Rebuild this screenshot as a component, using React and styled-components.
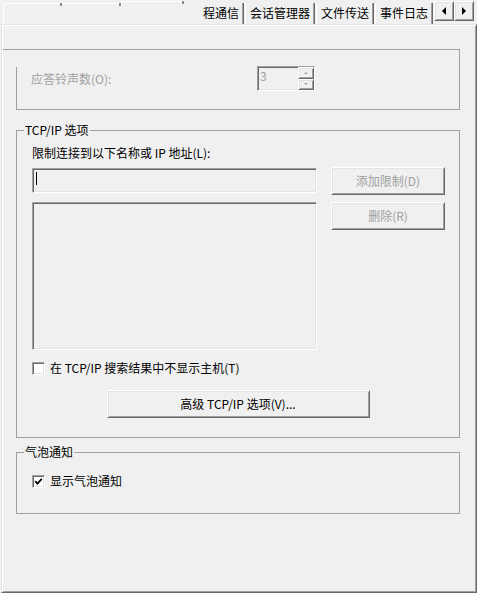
import React from 'react';
import styled, { createGlobalStyle, css } from 'styled-components';

const GlobalStyle = createGlobalStyle`
  html, body {
    margin: 0;
    padding: 0;
    background: #f0f0f0;
  }
  body {
    font-family: "Noto Sans CJK SC", "Liberation Sans", sans-serif;
    font-size: 12px;
    color: #000;
  }
`;

// classic 3D edges
const sunken = css`
  border-style: solid;
  border-width: 1px;
  border-color: #a0a0a0 #fff #fff #a0a0a0;
  box-shadow: inset 1px 1px 0 #696969, inset -1px -1px 0 #e3e3e3;
`;

const raised = css`
  border-style: solid;
  border-width: 1px;
  border-color: #fff #696969 #696969 #fff;
  box-shadow: inset 1px 1px 0 #e3e3e3, inset -1px -1px 0 #a0a0a0;
`;

const Window = styled.div`
  width: 477px;
  height: 593px;
  display: flex;
  flex-direction: column;
  overflow: hidden;
  box-sizing: border-box;
`;

const TabStrip = styled.div`
  height: 24px;
  display: flex;
  align-items: flex-start;
`;

const Ghosts = styled.div`
  flex: 1;
  display: flex;
  padding-left: 3px;
`;

const GhostTab = styled.div`
  position: relative;
  width: ${p => p.$w}px;
  height: ${p => p.$h}px;
  margin-top: ${p => p.$top}px;
  border-top: 1px solid #fff;
  border-left: ${p => (p.$edge ? '1px solid #fff' : 'none')};
  box-sizing: border-box;

  &::after {
    content: '';
    position: absolute;
    right: 0;
    top: -1px;
    width: 2px;
    height: 3px;
    background: #8c8c8c;
  }
`;

const Tab = styled.div`
  height: 21px;
  margin-top: 3px;
  line-height: 20px;
  padding: 0 4px 0 ${p => (p.$cut ? 1 : 4)}px;
  margin-left: 1px;
  border-left: ${p => (p.$cut ? 'none' : '1px solid #fff')};
  border-right: 1px solid #696969;
  box-shadow: inset -1px 0 0 #a0a0a0;
  white-space: nowrap;
  box-sizing: border-box;
`;

const Arrows = styled.div`
  display: flex;
  margin: 1px 3px 0 1px;
`;

const ArrowBtn = styled.div`
  width: 20px;
  height: 20px;
  box-sizing: border-box;
  display: flex;
  align-items: center;
  justify-content: center;
  ${raised}
`;

const Triangle = styled.span`
  width: 0;
  height: 0;
  border-top: 4px solid transparent;
  border-bottom: 4px solid transparent;
  ${p => (p.$dir === 'left' ? 'border-right: 4px solid #000;' : 'border-left: 4px solid #000;')}
`;

const Panel = styled.div`
  flex: 1;
  margin-left: 1px;
  padding: 24px 16px 0 14px;
  border-top: 1px solid #e3e3e3;
  border-left: 1px solid #e3e3e3;
  border-right: 1px solid #696969;
  border-bottom: 1px solid #696969;
  box-shadow: inset 1px 1px 0 #fff, inset -1px -1px 0 #a0a0a0;
  display: flex;
  flex-direction: column;
  box-sizing: border-box;
`;

/* the first box is drawn half clipped: its top line runs to the panel edge
   and its left line only starts below the top */
const RingBox = styled.div`
  position: relative;
  height: 61px;
  box-sizing: border-box;
  padding: 17px 0 0 15px;
  border-right: 1px solid #a0a0a0;
  border-bottom: 1px solid #a0a0a0;

  &::before {
    content: '';
    position: absolute;
    top: 0;
    left: -13px;
    right: 0;
    height: 1px;
    background: #a0a0a0;
  }
  &::after {
    content: '';
    position: absolute;
    left: 0;
    top: 18px;
    bottom: -1px;
    width: 1px;
    background: #a0a0a0;
  }
`;

const Row = styled.div`
  display: flex;
  align-items: center;
`;

const FieldLabel = styled.div`
  width: ${p => p.$w || 'auto'};
  line-height: 14px;
  color: ${p => (p.$disabled ? '#a0a0a0' : '#000')};
  white-space: nowrap;
`;

const Spinner = styled.div`
  width: 58px;
  height: 25px;
  box-sizing: border-box;
  display: flex;
  ${sunken}
`;

const SpinEdit = styled.div`
  flex: 1;
  padding: 2px 0 0 2px;
  line-height: 14px;
  color: #a0a0a0;
`;

const SpinButtons = styled.div`
  width: 16px;
  display: flex;
  flex-direction: column;
`;

const SpinBtn = styled.div`
  flex: 1;
  box-sizing: border-box;
  display: flex;
  align-items: center;
  justify-content: center;
  ${raised}
`;

const TinyArrow = styled.span`
  width: 0;
  height: 0;
  border-left: 2px solid transparent;
  border-right: 2px solid transparent;
  ${p => (p.$dir === 'up' ? 'border-bottom: 2px solid #a0a0a0;' : 'border-top: 2px solid #a0a0a0;')}
`;

const Group = styled.fieldset`
  margin: ${p => p.$mt}px 0 0;
  padding: 0;
  border: 1px solid #a0a0a0;
  min-width: 0;
`;

const Legend = styled.legend`
  margin-left: 7px;
  padding: 0 1px;
  line-height: 14px;
`;

const GroupBody = styled.div`
  padding: ${p => p.$pt}px 15px ${p => p.$pb}px 15px;
  display: flex;
  flex-direction: column;
`;

const FilterGrid = styled.div`
  display: grid;
  grid-template-columns: 285px 114px;
  column-gap: 14px;
  margin-top: 8px;
`;

const Column = styled.div`
  display: flex;
  flex-direction: column;
  gap: ${p => p.$gap}px;
  margin-top: ${p => p.$mt || 0}px;
`;

const TextBox = styled.div`
  height: ${p => p.$h}px;
  box-sizing: border-box;
  padding: 3px 0 0 3px;
  ${sunken}
`;

const Caret = styled.span`
  display: block;
  width: 1px;
  height: 13px;
  background: #000;
`;

const Button = styled.div`
  width: ${p => p.$w || 'auto'};
  height: 28px;
  box-sizing: border-box;
  display: flex;
  align-items: center;
  justify-content: center;
  color: ${p => (p.$disabled ? '#a0a0a0' : '#000')};
  line-height: 14px;
  white-space: nowrap;
  align-self: ${p => p.$center ? 'center' : 'auto'};
  margin-top: ${p => p.$mt || 0}px;
  ${raised}
`;

const CheckRow = styled.label`
  display: flex;
  align-items: center;
  gap: 5px;
  line-height: 14px;
  margin-top: ${p => p.$mt || 0}px;
`;

const Box = styled.span`
  width: 13px;
  height: 13px;
  box-sizing: border-box;
  background: #fff;
  display: flex;
  align-items: center;
  justify-content: center;
  ${sunken}
`;

function CheckBox({ checked, children, mt }) {
  return (
    <CheckRow $mt={mt}>
      <Box>
        {checked && (
          <svg width="9" height="9" viewBox="0 0 9 9">
            <polyline points="1.2,4.2 3.4,6.6 7.8,1.8" fill="none" stroke="#000" strokeWidth="1.8" />
          </svg>
        )}
      </Box>
      {children}
    </CheckRow>
  );
}

const ghostTabs = [
  { w: 59, top: 3, h: 21, edge: true },
  { w: 59, top: 3, h: 4 },
  { w: 63, top: 1, h: 4, edge: true },
];

const tabs = ['会话管理器', '文件传送', '事件日志'];

export default function App() {
  return (
    <>
      <GlobalStyle />
      <Window>
        <TabStrip>
          <Ghosts>
            {ghostTabs.map((g, i) => (
              <GhostTab key={i} $w={g.w} $top={g.top} $h={g.h} $edge={g.edge} />
            ))}
          </Ghosts>
          <Tab $cut>程通信</Tab>
          {tabs.map(t => (
            <Tab key={t}>{t}</Tab>
          ))}
          <Arrows>
            <ArrowBtn><Triangle $dir="left" /></ArrowBtn>
            <ArrowBtn><Triangle $dir="right" /></ArrowBtn>
          </Arrows>
        </TabStrip>

        <Panel>
          <RingBox>
            <Row>
              <FieldLabel $w="226px" $disabled>应答铃声数(O):</FieldLabel>
              <Spinner>
                <SpinEdit>3</SpinEdit>
                <SpinButtons>
                  <SpinBtn><TinyArrow $dir="up" /></SpinBtn>
                  <SpinBtn><TinyArrow $dir="down" /></SpinBtn>
                </SpinButtons>
              </Spinner>
            </Row>
          </RingBox>

          <Group $mt={13}>
            <Legend>TCP/IP 选项</Legend>
            <GroupBody $pt={9} $pb={19}>
              <FieldLabel>限制连接到以下名称或 IP 地址(L):</FieldLabel>
              <FilterGrid>
                <Column $gap={9}>
                  <TextBox $h={25}><Caret /></TextBox>
                  <TextBox $h={148} />
                </Column>
                <Column $gap={7} $mt={-1}>
                  <Button $disabled>添加限制(D)</Button>
                  <Button $disabled>删除(R)</Button>
                </Column>
              </FilterGrid>
              <CheckBox mt={11}>在 TCP/IP 搜索结果中不显示主机(T)</CheckBox>
              <Button $w="263px" $center $mt={15}>高级 TCP/IP 选项(V)...</Button>
            </GroupBody>
          </Group>

          <Group $mt={7}>
            <Legend>气泡通知</Legend>
            <GroupBody $pt={15} $pb={25}>
              <CheckBox checked>显示气泡通知</CheckBox>
            </GroupBody>
          </Group>
        </Panel>
      </Window>
    </>
  );
}
